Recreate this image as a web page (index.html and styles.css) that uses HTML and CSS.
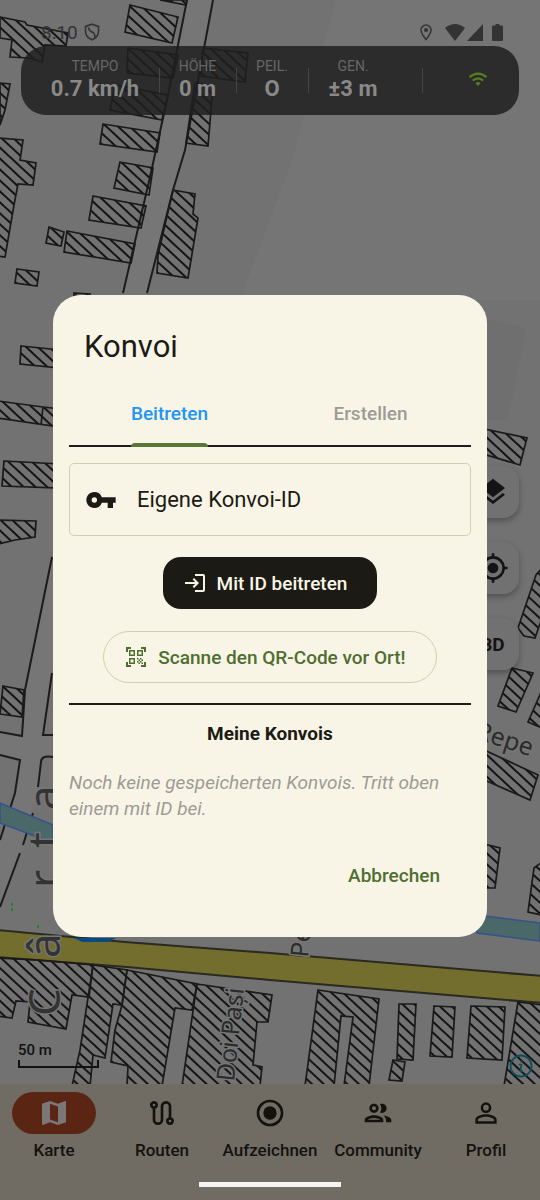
FILE: index.html
```html
<!DOCTYPE html>
<html lang="de">
<head>
  <meta charset="utf-8">
  <meta name="viewport" content="width=device-width, initial-scale=1.0">
  <title>Konvoi</title>
  <link rel="stylesheet" href="styles.css">
</head>
<body>
<div class="app">
  <!-- Karte -->
  <svg class="map" viewBox="0 0 540 1200" preserveAspectRatio="xMidYMid slice" aria-hidden="true">
    <defs>
      <pattern id="hatch" width="8" height="8" patternUnits="userSpaceOnUse" patternTransform="rotate(-47)">
        <path d="M4 0V8" stroke="#141414" stroke-width="2"/>
      </pattern>
    </defs>
    <path class="area" d="M336 0L292 160 240 300H540V0Z"/>
    <path class="area-dark" d="M487 319L526 328 508 420H487Z"/>
    <path class="road" d="M187 0L167 100 150 177 123 293 52 557 25 690 22 736 0 732V755L20 760 15 793 0 840V907L20 853 38 787 41 760 52 757V735H43L52 673 147 293 173 190 185 150 213 0Z"/>
    <g class="line">
      <path d="M187 0L167 100 150 177 123 293M213 0L185 150 173 190 147 293"/>
      <path d="M52 557L25 690 22 736 0 732M52 673L43 735H53M0 755L20 760 15 793 0 840M53 757Q41 755 41 762L38 787M33 813L23 845M20 853L0 907"/>
    </g>
    <g class="water">
      <path d="M0 803L53 825V843L0 823Z"/>
      <path d="M477 915L540 923V941L477 933Z"/>
    </g>
    <path class="road-main" d="M-2 930L125 942 270 953 542 976V1003L270 980 127 967 -2 957Z"/>
    <path class="shield" d="M74 938H116L108 942H82Z"/>
    <g class="houses">
      <path d="M160 0H187L186 5Z"/>
      <path d="M130 5L178 17 172 43 125 32Z"/>
      <path d="M128 48L178 55 173 78 127 73Z"/>
      <path d="M115 85L168 95 162 120 110 110Z"/>
      <path d="M103 124L160 133 157 152 100 144Z"/>
      <path d="M203 48L248 53 245 82 200 76Z"/>
      <path d="M195 83L213 86 208 146 186 143Z"/>
      <path d="M0 17L25 22 27 25 68 33 66 46 45 45 42 62 28 58 10 57 12 40 0 38Z"/>
      <path d="M0 83L10 84 5 110 0 125Z"/>
      <path d="M-2 138L23 140 20 160 36 163 33 185 18 184 14 205 5 257-2 256Z"/>
      <path d="M120 162L153 168 149 195 114 188Z"/>
      <path d="M93 196L146 206 141 228 89 220Z"/>
      <path d="M49 227L64 232 61 246 46 243Z"/>
      <path d="M67 231L135 244 131 263 64 252Z"/>
      <path d="M17 269L39 272 37 286 15 283Z"/>
      <path d="M173 190L195 194 193 214 198 218 188 278 157 273 158 255Z"/>
      <path d="M74 293L90 294V305H74Z"/>
      <path d="M21 346L60 350V368L20 364Z"/>
      <path d="M-2 401L43 407 60 409V427L-2 418ZM43 407L41 425"/>
      <path d="M4 461L60 464V488L2 486Z"/>
      <path d="M-2 520L36 521 35 537 15 540-2 544Z"/>
      <path d="M3 686L24 690 22 717 0 714Z"/>
      <path d="M480 428L527 438 520 465 480 453Z"/>
      <path d="M542 568L536 575 518 628 524 636 535 638 542 618Z"/>
      <path d="M512 668L533 673 516 712 498 706Z"/>
      <path d="M542 690L528 722 542 728Z"/>
      <path d="M480 748L538 775 530 800 480 778Z"/>
      <path d="M480 843L500 848 495 888H480Z"/>
      <path d="M542 862L534 868 528 912 542 915Z"/>
      <path d="M-2 958L38 960 93 965 89 997 72 995 66 1029 28 1022 30 1002 16 1001 12 1018-2 1016Z"/>
      <path d="M93 965L127 970 122 1005 113 1004 105 1058 93 1055 90 1086H72L80 1050Z"/>
      <path d="M127 970L197 984 192 1010 175 1008 162 1086H127L128 1066 111 1062 115 1030 122 1005Z"/>
      <path d="M197 984L272 995 268 1022H257L253 1065 262 1067 260 1086H182Z"/>
      <path d="M318 990L379 999 369 1086H344L353 1017 341 1016 334 1086H305Z"/>
      <path d="M399 1004H416L413 1060 397 1059Z"/>
      <path d="M393 1060L405 1062 402 1081 389 1080Z"/>
      <path d="M434 1006L455 1007 452 1057 430 1056Z"/>
      <path d="M471 1006L505 1007 502 1060 467 1058Z"/>
      <path d="M518 1002L542 1005V1086H504Z"/>
    </g>
    <path class="trees" d="M38 872v3M38 877v3M12 903v3M12 908v3M38 925v3"/>
    <g class="names">
      <text class="name-big" transform="translate(60 1016) rotate(-90)" x="0 58 128 168 206">Cârta</text>
      <text transform="translate(234 1082) rotate(-84)">Doi Pași</text>
      <text transform="translate(308 958) rotate(-84)">Petru</text>
      <text transform="translate(474 738) rotate(18)">Repe</text>
    </g>
  </svg>

  <div class="map-tools">
    <button class="tool" type="button" aria-label="Ebenen">
      <svg viewBox="0 0 24 24"><path d="M11.99 18.54L4.62 12.81 3 14.07l9 7 9-7-1.63-1.27zM12 16l7.36-5.73L21 9l-9-7-9 7 1.63 1.27z"/></svg>
    </button>
    <button class="tool" type="button" aria-label="Mein Standort">
      <svg viewBox="0 0 24 24"><path d="M12 8a4 4 0 1 0 0 8 4 4 0 0 0 0-8zm8.94 3A8.99 8.99 0 0 0 13 3.06V1h-2v2.06A8.99 8.99 0 0 0 3.06 11H1v2h2.06A8.99 8.99 0 0 0 11 20.94V23h2v-2.06A8.99 8.99 0 0 0 20.94 13H23v-2h-2.06zM12 19a7 7 0 1 1 0-14 7 7 0 0 1 0 14z"/></svg>
    </button>
    <button class="tool" type="button">3D</button>
  </div>

  <header class="top">
    <div class="status">
      <span class="time">8:10</span>
      <svg class="icon-shield" viewBox="0 0 16 18"><path d="M8 1.2L14.5 3.4V8.5Q14.5 14 8 16.8 1.5 14 1.5 8.5V3.4ZM4.5 4.5Q5 8 8 9T11 14.5" fill="none" stroke="currentColor" stroke-width="1.6"/></svg>
      <span class="status-icons">
        <svg width="12" height="17" viewBox="0 0 12 17"><path d="M6 1a5 5 0 0 0-5 5c0 3.500 5 9.500 5 9.500S11 9.500 11 6a5 5 0 0 0-5-5z" fill="none" stroke="currentColor" stroke-width="1.500"/><circle cx="6" cy="6" r="2" fill="currentColor"/></svg>
        <svg class="s-wifi" width="20" height="17" viewBox="0 0 20 17"><path d="M10 17L0 4Q10-4 20 4Z" fill="currentColor"/></svg>
        <svg width="16" height="17" viewBox="0 0 16 17"><path d="M16 0V17H0Z" fill="currentColor"/></svg>
        <svg class="s-battery" width="11" height="17" viewBox="0 0 11 17"><path d="M3.500 0h4v1.500H10a1 1 0 0 1 1 1V16a1 1 0 0 1-1 1H1a1 1 0 0 1-1-1V2.500a1 1 0 0 1 1-1h2.500z" fill="currentColor"/></svg>
      </span>
    </div>
    <div class="stats">
      <div class="stat stat-speed"><span>TEMPO</span><b>0.7 km/h</b></div>
      <div class="stat"><span>HÖHE</span><b>0 m</b></div>
      <div class="stat"><span>PEIL.</span><b>O</b></div>
      <div class="stat stat-gps"><span>GEN.</span><b>±3 m</b></div>
      <div class="stat stat-signal">
        <svg viewBox="0 0 20 14"><path d="M1.500 5.200Q10-2 18.500 5.200M4.800 8.600Q10 4 15.200 8.600" fill="none" stroke="currentColor" stroke-width="2.200"/><path d="M10 14L7.500 11.200Q10 9 12.500 11.200Z" fill="currentColor"/></svg>
      </div>
    </div>
  </header>

  <footer class="bottom">
    <div class="map-foot">
      <div class="scale">50 m</div>
      <button class="info" type="button" aria-label="Info">
        <svg viewBox="0 0 24 24"><circle cx="12" cy="12" r="10.500" fill="none" stroke="currentColor" stroke-width="1.800"/><path d="M12.500 6.200v2.200M9.800 10.500h2.600l-1 6.500q0 1 2.400.200" fill="none" stroke="currentColor" stroke-width="1.700"/></svg>
      </button>
    </div>
    <nav class="nav">
      <a class="active" href="#karte">
        <i><svg viewBox="0 0 24 24"><path fill-rule="evenodd" d="M20.500 3l-.16.03L15 5.100 9 3 3.360 4.900a.5.5 0 0 0-.36.480V20.500c0 .280.220.5.5.5l.16-.03L9 18.900l6 2.100 5.640-1.900a.5.5 0 0 0 .36-.480V3.500a.5.5 0 0 0-.5-.5zM15 19l-6-2.110V5l6 2.110V19z"/></svg></i>
        Karte
      </a>
      <a href="#routen">
        <i><svg viewBox="0 0 24 24"><path d="M19 15.180V7a4 4 0 0 0-8 0v10a2 2 0 0 1-4 0V8.820A3 3 0 1 0 5 8.820V17a4 4 0 0 0 8 0V7a2 2 0 0 1 4 0v8.180a3 3 0 1 0 2 0zM6 7a1 1 0 1 1 0-2 1 1 0 0 1 0 2zm12 12a1 1 0 1 1 0-2 1 1 0 0 1 0 2z"/></svg></i>
        Routen
      </a>
      <a href="#aufzeichnen">
        <i><svg viewBox="0 0 24 24"><circle cx="12" cy="12" r="9" fill="none" stroke="currentColor" stroke-width="2"/><circle cx="12" cy="12" r="5"/></svg></i>
        Aufzeichnen
      </a>
      <a href="#community">
        <i><svg viewBox="0 0 24 24"><path d="M9 13.750c-2.340 0-7 1.170-7 3.500V19h14v-1.750c0-2.330-4.660-3.500-7-3.500zM4.340 17c.84-.58 2.870-1.250 4.660-1.250s3.820.67 4.660 1.250H4.340zM9 12c1.930 0 3.500-1.570 3.500-3.500S10.930 5 9 5 5.500 6.570 5.500 8.500 7.070 12 9 12zm0-5c.83 0 1.500.67 1.500 1.500S9.830 10 9 10s-1.500-.67-1.500-1.500S8.170 7 9 7zm7.040 6.810c1.160.84 1.960 1.960 1.960 3.440V19h4v-1.750c0-2.020-3.500-3.170-5.960-3.440zM15 12c1.930 0 3.500-1.570 3.500-3.500S16.930 5 15 5c-.54 0-1.040.13-1.500.35.63.89 1 1.980 1 3.150s-.37 2.260-1 3.150c.46.22.96.35 1.500.35z"/></svg></i>
        Community
      </a>
      <a href="#profil">
        <i><svg viewBox="0 0 24 24"><path fill-rule="evenodd" d="M12 5.900a2.100 2.100 0 1 1 0 4.200 2.100 2.100 0 0 1 0-4.200m0 9c2.970 0 6.100 1.460 6.100 2.100v1.100H5.900V17c0-.64 3.130-2.100 6.100-2.100M12 4a4 4 0 1 0 0 8 4 4 0 0 0 0-8zm0 9c-2.670 0-8 1.340-8 4v3h16v-3c0-2.660-5.330-4-8-4z"/></svg></i>
        Profil
      </a>
    </nav>
    <div class="home-bar"></div>
  </footer>

  <!-- Konvoi-Dialog -->
  <div class="overlay">
    <section class="dialog" role="dialog" aria-modal="true" aria-labelledby="dialog-title">
      <h1 id="dialog-title">Konvoi</h1>
      <div class="tabs" role="tablist">
        <button type="button" role="tab" aria-selected="true"><span>Beitreten</span></button>
        <button type="button" role="tab" aria-selected="false"><span>Erstellen</span></button>
      </div>
      <label class="field" for="konvoi-id">
        <svg viewBox="0 0 24 24" aria-hidden="true"><path d="M12.650 10A5.990 5.990 0 0 0 7 6c-3.310 0-6 2.690-6 6s2.690 6 6 6a5.990 5.990 0 0 0 5.650-4H17v4h4v-4h2v-4H12.650zM7 14a2 2 0 1 1 0-4 2 2 0 0 1 0 4z"/></svg>
        <input id="konvoi-id" type="text" placeholder="Eigene Konvoi-ID" aria-label="Eigene Konvoi-ID">
      </label>
      <button class="btn btn-join" type="button">
        <svg viewBox="0 0 24 24" aria-hidden="true"><path d="M11 7L9.600 8.400l2.600 2.600H2v2h10.200l-2.600 2.600L11 17l5-5-5-5zm9 12h-8v2h8a2 2 0 0 0 2-2V5a2 2 0 0 0-2-2h-8v2h8v14z"/></svg>
        Mit ID beitreten
      </button>
      <button class="btn btn-scan" type="button">
        <svg viewBox="0 0 24 24" aria-hidden="true"><path d="M9.500 6.500v3h-3v-3h3M11 5H5v6h6V5zm-1.500 9.500v3h-3v-3h3M11 13H5v6h6v-6zm6.500-6.500v3h-3v-3h3M19 5h-6v6h6V5zm-6 8h1.500v1.500H13V13zm1.500 1.500H16V16h-1.500v-1.500zM16 13h1.500v1.500H16V13zm-3 3h1.500v1.500H13V16zm1.500 1.500H16V19h-1.500v-1.500zM16 16h1.500v1.500H16V16zm1.500-1.500H19V16h-1.500v-1.500zm0 3H19V19h-1.500v-1.500zM22 7h-2V4h-3V2h5v5zm0 15v-5h-2v3h-3v2h5zM2 22h5v-2H4v-3H2v5zM2 2v5h2V4h3V2H2z"/></svg>
        Scanne den QR-Code vor Ort!
      </button>
      <hr>
      <h2>Meine Konvois</h2>
      <p>Noch keine gespeicherten Konvois. Tritt oben einem mit ID bei.</p>
      <div class="actions">
        <button type="button">Abbrechen</button>
      </div>
    </section>
  </div>
</div>
</body>
</html>
```
FILE: styles.css
```css
*{box-sizing: border-box;}
body{margin: 0;font-family: Roboto, "Noto Sans", sans-serif;color: #1c1a14;background: #727272;}
button, input{font: inherit;color: inherit;border: 0;background: none;padding: 0;margin: 0;}
svg{display: block;flex: none;fill: currentColor;}

.app{position: relative;display: flex;flex-direction: column;justify-content: space-between;min-height: 100vh;overflow: hidden;}

/* map */
.map{position: absolute;top: 0;left: 0;width: 100%;height: 100%;}
.area{fill: #757575;}
.area-dark{fill: #6f6f6f;}
.road{fill: #767676;}
.line{fill: none;stroke: #1c1c1c;stroke-width: 2;}
.water{fill: #4b6869;stroke: #36528c;stroke-width: 1.5;}
.road-main{fill: #736d2e;stroke: #2a2a20;stroke-width: 2;}
.shield{fill: #0b4a80;}
.houses{fill: url(#hatch);stroke: #1a1a1a;stroke-width: 1.7;}
.trees{stroke: #2f7a35;stroke-width: 2;}
.names{font-family: "Noto Sans", sans-serif;font-size: 25px;fill: #2c2c2c;stroke: #767676;stroke-width: 3;paint-order: stroke;}
.name-big{font-size: 44px;fill: #333;}

.map-tools{position: absolute;top: 466px;right: 21px;display: flex;flex-direction: column;gap: 24px;}
.tool{display: flex;align-items: center;justify-content: center;width: 52px;height: 52px;border-radius: 16px;background: #717171;box-shadow: 0 3px 6px rgba(0,0,0,.3);font-size: 19px;font-weight: 700;color: #141414;}
.tool svg{width: 32px;}

/* status bar and live values */
.top{position: relative;padding: 18px 21px 0;color: #333;}
.status{display: flex;align-items: center;height: 28px;padding: 0 16px 0 20px;}
.time{font-size: 19px;}
.icon-shield{width: 16px;margin-left: 6px;}
.status-icons{display: flex;align-items: center;margin-left: auto;}
.s-wifi{margin: 0 2px 0 13px;}
.s-battery{margin-left: 9px;}
.stats{display: grid;grid-template-columns: 138fr 77fr 72fr 114fr 97fr;height: 69px;border-radius: 25px;background: rgba(32,32,32,.85);color: #8a8a8a;}
.stat{position: relative;display: flex;flex-direction: column;align-items: center;justify-content: center;padding-bottom: 3px;font-size: 14px;line-height: 20px;color: #676767;}
.stat b{font-size: 22px;line-height: 26px;color: #898989;}
.stat + .stat::before{content: "";position: absolute;left: 0;top: 22px;bottom: 22px;width: 1px;background: #454545;}
.stat-speed{padding-left: 10px;}
.stat-gps{padding-right: 24px;}
.stat-signal{padding-left: 14px;color: #558022;}
.stat-signal svg{width: 20px;}

/* bottom */
.bottom{position: relative;}
.map-foot{display: flex;align-items: flex-end;justify-content: space-between;padding: 0 7px 6px 18px;}
.scale{width: 81px;height: 28px;margin-bottom: 10px;font-size: 15px;line-height: 20px;font-weight: 500;color: #111;background: linear-gradient(#111,#111) left bottom/2px 8px no-repeat, linear-gradient(#111,#111) right bottom/2px 8px no-repeat, linear-gradient(#111,#111) left bottom/100% 2px no-repeat;}
.info{color: #0f4c5c;}
.info svg{width: 24px;}
.nav{display: grid;grid-template-columns: repeat(5, 1fr);padding-top: 8px;background: #706c64;}
.nav a{display: flex;flex-direction: column;align-items: center;gap: 4px;font-size: 17px;line-height: 24px;font-weight: 500;color: #14120d;text-decoration: none;}
.nav i{display: flex;align-items: center;justify-content: center;width: 84px;height: 42px;border-radius: 21px;}
.nav svg{width: 32px;}
.nav .active i{background: #5b2513;color: #7b7777;}
.home-bar{height: 38px;background: linear-gradient(#f3f3f1,#f3f3f1) center 20px/142px 5px no-repeat #706c64;}

/* dialog */
.overlay{position: absolute;top: 0;right: 0;bottom: 0;left: 0;display: grid;align-items: center;padding: 32px 53px 0;}
.dialog{display: flex;flex-direction: column;align-items: center;padding: 31px 16px 36px;border-radius: 28px;background: #f9f5e6;}
.dialog h1{align-self: stretch;margin: 0 15px;font-size: 31px;line-height: 42px;font-weight: 400;}
.tabs{align-self: stretch;display: grid;grid-template-columns: 1fr 1fr;margin-top: 16px;box-shadow: inset 0 -2px #1f1d1c;}
.tabs button{font-size: 19px;line-height: 59px;font-weight: 500;color: #9c9b96;}
.tabs span{display: inline-block;}
.tabs span::after{content: "";display: block;height: 4px;border-radius: 4px 4px 0 0;}
.tabs [aria-selected="true"]{color: #2196f3;}
.tabs [aria-selected="true"] span::after{background: #5a7636;}
.field{align-self: stretch;display: flex;align-items: center;gap: 20px;height: 73px;margin-top: 16px;padding: 0 15px;border: 1px solid #d6ceb0;border-radius: 5px;}
.field svg{width: 32px;}
.field input{flex: 1;min-width: 0;font-size: 22px;line-height: 32px;outline: 0;}
.field input::placeholder{color: #1c1a14;opacity: 1;}
.btn{display: flex;align-items: center;gap: 10px;height: 52px;padding: 0 30px 0 20px;border-radius: 18px;font-size: 19px;font-weight: 500;}
.btn svg{width: 24px;}
.btn-join{margin: 21px 0 22px;background: #1c1a14;color: #f9f5e6;}
.btn-scan{border: 1px solid #d6ceb0;border-radius: 26px;color: #4f6e31;}
.dialog hr{align-self: stretch;height: 2px;margin: 20px 0 16px;border: 0;background: #1f1d1c;}
.dialog h2{margin: 0;font-size: 19px;line-height: 26px;font-weight: 700;}
.dialog p{align-self: stretch;margin: 23px 0 27px;font-size: 19px;line-height: 26px;font-style: italic;color: #9c9b96;}
.actions{align-self: stretch;display: flex;justify-content: flex-end;padding: 0 15px;}
.actions button{height: 52px;padding: 0 16px;font-size: 19px;font-weight: 500;color: #4f6e31;}
```
